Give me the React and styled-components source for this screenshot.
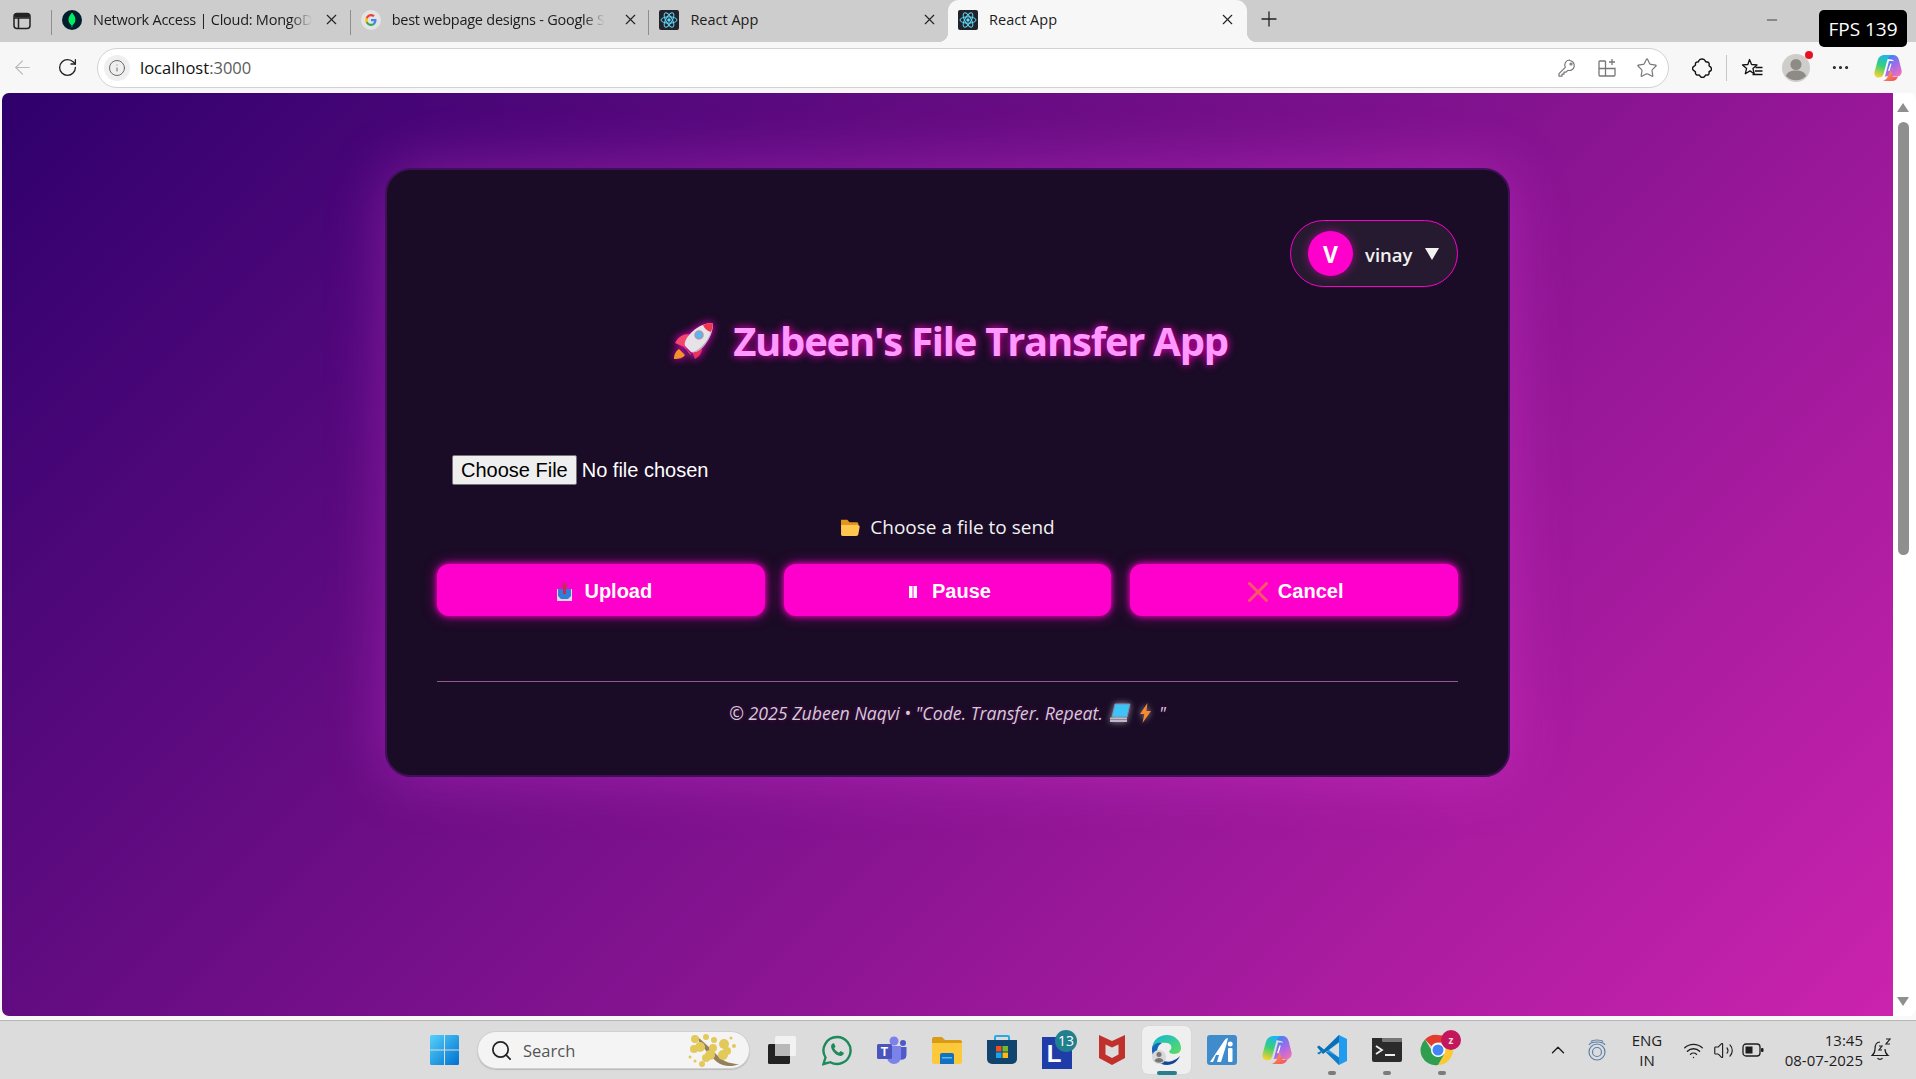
import React from 'react';
import styled, { createGlobalStyle } from 'styled-components';
import { ArrowLeft, RotateCw, Info, X, Plus, Minus, Star, Search, ChevronUp, Wifi, Volume2, MoreHorizontal } from 'lucide-react';

const UI = '"Open Sans", "Noto Sans", sans-serif';

const Global = createGlobalStyle`
  html, body { margin: 0; padding: 0; height: 100%; overflow: hidden; }
  body { font-family: ${UI}; background: #f7f7f7; }
  * { box-sizing: border-box; }
`;

const Screen = styled.div`
  position: relative; width: 1916px; height: 1079px;
  display: flex; flex-direction: column; overflow: hidden;
`;

/* ---------- tab strip ---------- */
const TabStrip = styled.div`
  height: 42px; flex: none; background: #cdcdcd; display: flex; align-items: stretch;
`;
const SideButton = styled.div`
  width: 52px; display: flex; align-items: center; justify-content: flex-start; padding-left: 13px; position: relative;
  &::after { content: ''; position: absolute; right: 0; top: 10px; bottom: 7px; width: 1px; background: #8e8e8e; }
`;
const Tab = styled.div`
  width: 298.7px; height: 42px; flex: none; position: relative;
  display: flex; align-items: center; padding: 0 10px 3px 10px;
  color: #1c1c1c; font-size: 14.5px;
  background: ${p => (p.$active ? '#f7f7f7' : 'transparent')};
  border-radius: ${p => (p.$active ? '11px 11px 0 0' : '0')};
  ${p => p.$sep && `&::after { content: ''; position: absolute; right: 0; top: 10px; bottom: 7px; width: 1px; background: #8e8e8e; }`}
  ${p => p.$active && `
    &::before, &::after {
      content: ''; position: absolute; bottom: 0; width: 10px; height: 10px;
    }
    &::before { left: -10px; background: radial-gradient(circle at 0 0, transparent 10px, #f7f7f7 10.5px); }
    &::after { right: -10px; background: radial-gradient(circle at 100% 0, transparent 10px, #f7f7f7 10.5px); }
  `}
`;
const TabIcon = styled.span`
  width: 20px; height: 20px; flex: none; display: flex; align-items: center; justify-content: center; margin-right: 11px;
`;
const TabTitle = styled.span`
  flex: 1; white-space: nowrap;
  ${p => p.$fade && `letter-spacing: -0.25px; -webkit-mask-image: linear-gradient(90deg, #000 222px, transparent 226px), linear-gradient(90deg, #000 0, #000 0); mask-image: linear-gradient(90deg, #000 90%, transparent 100%); flex: 0 0 auto; margin-right: auto;`}
`;
const TabClose = styled.span`
  width: 18px; display: flex; justify-content: center; color: #222; flex: none;
`;
const NewTab = styled.div`
  width: 44px; display: flex; align-items: center; justify-content: center; color: #222; padding-bottom: 4px; padding-left: 1px;
`;
const WinControls = styled.div`
  margin-left: auto; width: 152px; display: flex; align-items: flex-start; padding-top: 12px; color: #222;
`;
const FpsBadge = styled.div`
  position: absolute; left: 1819px; top: 10px; width: 88px; height: 37px;
  background: #000; color: #fff; border-radius: 5px; font-size: 19px;
  display: flex; align-items: center; justify-content: center; z-index: 5;
`;

/* ---------- tool bar ---------- */
const Toolbar = styled.div`
  height: 51px; flex: none; background: #f7f7f7; display: flex; align-items: center; padding-right: 2px;
`;
const ToolButton = styled.div`
  width: ${p => p.$w || 44}px; height: 40px; flex: none; display: flex; align-items: center; justify-content: center;
  position: relative; color: ${p => p.$dim ? '#b9b9b9' : '#222'};
`;
const Address = styled.div`
  flex: 1; height: 40px; margin: 0 11px 0 7px; background: #fff; border: 1.5px solid #d2d2d2; border-radius: 20px;
  display: flex; align-items: center; padding-left: 6px; padding-right: 1px;
`;
const InfoBubble = styled.div`
  width: 26px; height: 26px; border-radius: 50%; background: #efefef; color: #666;
  display: flex; align-items: center; justify-content: center; margin-right: 10px;
`;
const Url = styled.div`
  flex: 1; font-size: 16.5px; color: #111; white-space: nowrap;
  & > span { color: #5c5c5c; }
`;
const AddrIcon = styled.div`
  width: 40px; display: flex; align-items: center; justify-content: center; color: #777;
`;
const ToolDivider = styled.div`
  width: 1px; height: 26px; background: #c6c6c6; margin: 0 3px 0 2px; flex: none;
`;
const NotifyDot = styled.span`
  position: absolute; right: 5px; top: 3px; width: 8px; height: 8px; background: #e81123; border-radius: 50%;
`;

/* ---------- page ---------- */
const Main = styled.div`
  height: 927px; flex: none; display: flex; padding: 0 0 4px 2px; background: #f9f9f9;
`;
const Viewport = styled.main`
  flex: 1; border-radius: 7px 0 0 7px; display: flex; justify-content: center; align-items: flex-start; padding-top: 75px;
  background: linear-gradient(135deg, #2f006c 0%, #cb23ae 100%);
`;
const Card = styled.section`
  width: 1125px; height: 609px; padding: 50px; background: #1a0b26; border: 2px solid #3f0f57; border-radius: 26px;
  box-shadow: 0 0 60px rgba(255, 70, 240, 0.3); display: flex; flex-direction: column;
`;
const Header = styled.div`
  display: flex; justify-content: flex-end;
`;
const ProfilePill = styled.div`
  width: 168px; height: 67px; border: 1px solid #ff00cc; border-radius: 34px; background: #261a30;
  display: flex; align-items: center; padding-left: 17px;
`;
const Avatar = styled.div`
  width: 45px; height: 45px; border-radius: 50%; background: #ff00cc; color: #fff; font-weight: 700; font-size: 23px;
  font-family: ${UI}; display: flex; align-items: center; justify-content: center; box-shadow: 0 0 10px rgba(255,0,204,.55);
`;
const UserName = styled.span`
  margin-left: 12px; color: #f2f2f2; font-size: 18.5px; font-weight: 600; padding-top: 1px;
`;
const Caret = styled.span`
  margin-left: 13px; width: 0; height: 0; border-left: 7px solid transparent; border-right: 7px solid transparent; border-top: 12px solid #f2f2f2; margin-top: 0;
`;
const Title = styled.h1`
  margin: 27px 0 0; height: 54px; padding-left: 7px; font-size: 40px; line-height: 54px; font-weight: 700; color: #ff99ff; text-align: center;
  letter-spacing: -1.25px; text-shadow: 0 0 8px #ff00cc; display: flex; align-items: center; justify-content: center; gap: 19px; font-family: ${UI};
  & > svg { filter: drop-shadow(0 0 4px #ff00cc); }
`;
const FileRow = styled.div`
  margin-top: 87px; padding-left: 15px; height: 30px; display: flex;
`;
const FileInput = styled.input`
  font: 20px "Liberation Sans", Arial, sans-serif; color: #fff; height: 30px; width: 420px;
  &::file-selector-button {
    font: 20px "Liberation Sans", Arial, sans-serif; height: 30px; margin-right: 5px; padding: 1px 8px;
    background: #efefef; color: #000; border: 1px solid #767676; border-radius: 2px;
  }
`;
const Hint = styled.p`
  margin: 29px 0 0; height: 27px; line-height: 27px; text-align: center; color: #f1f1f1; font-size: 19px;
  display: flex; align-items: center; justify-content: center; gap: 9px;
`;
const Actions = styled.div`
  margin-top: 23px; display: grid; grid-template-columns: repeat(3, 1fr); gap: 19px;
`;
const ActionButton = styled.button`
  height: 52px; background: #ff00cc; border: 0; border-radius: 12px; color: #fff;
  font: 700 20px "Liberation Sans", Arial, sans-serif; box-shadow: 0 0 14px #ff00cc80, 0 0 6px #ff00cc;
  display: flex; align-items: center; justify-content: center; gap: 10px;
  padding: 3px ${p => p.$pr || 0}px 0 ${p => p.$pl || 0}px;
`;
const BtnIcon = styled.span`
  width: 20px; height: 24px; display: flex; align-items: center; justify-content: center;
`;
const Rule = styled.hr`
  margin: 65px 0 0; border: 0; height: 1px; background: #94578f;
`;
const Footer = styled.footer`
  margin-top: 19px; height: 24px; line-height: 24px; text-align: center; font-style: italic; font-size: 17.7px; color: #d2ccd8;
  text-shadow: 0 0 5px rgba(255,0,204,.3);
  display: flex; align-items: center; justify-content: center; gap: 7px;
  & > svg { filter: drop-shadow(0 0 3px rgba(255,255,255,.55)); }
`;

/* ---------- scroll bar ---------- */
const ScrollBar = styled.div`
  width: 23px; flex: none; background: #fff; border-radius: 0 8px 8px 0; display: flex; flex-direction: column; align-items: center;
  padding: 10px 3px 10px 0;
`;
const ArrowUp = styled.div`
  width: 0; height: 0; border-left: 6px solid transparent; border-right: 6px solid transparent; border-bottom: 9px solid #8f8f8f;
`;
const ArrowDown = styled(ArrowUp)`
  border-bottom: 0; border-top: 9px solid #8f8f8f; margin-top: auto;
`;
const Thumb = styled.div`
  width: 11px; height: 433px; margin-top: 10px; background: #8f8f8f; border-radius: 6px;
`;

/* ---------- task bar ---------- */
const Taskbar = styled.footer`
  height: 59px; flex: none; background: #dcdcdc; border-top: 1px solid #b7b7b7; display: flex; align-items: center; padding-left: 417px;
`;
const TaskSlot = styled.div`
  width: 55px; height: 48px; flex: none; position: relative; display: flex; align-items: center; justify-content: center;
  ${p => p.$active && `&::before { content: ''; position: absolute; left: 3px; right: 3px; top: 0; bottom: 0; background: #efefef; border-radius: 6px; box-shadow: 0 0 1px #bbb; }
   & > svg { position: relative; }`}
`;
const RunDot = styled.span`
  position: absolute; bottom: -1px; left: 50%; transform: translateX(-50%); height: 4px; border-radius: 2px;
  width: ${p => (p.$wide ? 20 : 8)}px; background: ${p => (p.$wide ? '#2a7f8f' : '#7b7b7b')};
`;
const SearchBox = styled.div`
  width: 273px; height: 38px; margin: 0 4px 0 5px; background: #f4f4f4; border-radius: 19px; border: 1px solid #d0d0d0; flex: none;
  display: flex; align-items: center; padding-left: 12px; color: #555; font-size: 16.5px; gap: 10px; position: relative; box-shadow: 0 1px 1px #bbb;
  & > svg:first-child { color: #222; }
  & > svg:last-child { margin-left: auto; margin-right: 6px; }
`;
const Tray = styled.div`
  margin-left: auto; display: flex; align-items: center; padding-right: 21px; color: #1d1d1d;
`;
const TrayIcon = styled.div`
  width: ${p => p.$w || 30}px; display: flex; align-items: center; justify-content: center; flex: none; margin-right: ${p => p.$mr || 0}px;
`;
const Lang = styled.div`
  width: 50px; margin-right: 6px; margin-left: 1px; text-align: center; font-size: 15px; line-height: 20px;
`;
const Clock = styled.div`
  width: 80px; text-align: right; font-size: 15px; line-height: 20px; margin: 0 6px 0 15px; white-space: nowrap;
`;

/* ---------- drawings ---------- */
const Mongo = () => (
  <svg width="20" height="20" viewBox="0 0 20 20"><circle cx="10" cy="10" r="10" fill="#001e2b"/><path d="M10 2.5c2.6 3 3.6 5.3 3.4 7.7-.2 2.3-1.6 4-3 5l-.2 2.4h-.5l-.2-2.4c-1.4-1-2.8-2.7-3-5C6.400 7.800 7.400 5.500 10 2.500z" fill="#00ed64"/></svg>
);
const GoogleG = () => (
  <svg width="20" height="20" viewBox="0 0 20 20"><circle cx="10" cy="10" r="10" fill="#e4e4e4"/><path d="M15.500 10.200c0-.4 0-.8-.1-1.200H10v2.300h3.100c-.1.700-.5 1.300-1.100 1.700v1.400h1.800c1.100-1 1.700-2.500 1.700-4.200z" fill="#4285f4"/><path d="M10 16c1.500 0 2.800-.5 3.800-1.400L12 13.200c-.5.3-1.200.6-2 .6-1.500 0-2.800-1-3.200-2.400H4.900v1.400C5.900 14.700 7.800 16 10 16z" fill="#34a853"/><path d="M6.800 11.400c-.2-.9-.2-1.800 0-2.700V7.300H4.900c-.8 1.600-.8 3.800 0 5.500z" fill="#fbbc05"/><path d="M10 6.300c.8 0 1.600.3 2.200.8l1.600-1.600C12.800 4.600 11.500 4 10 4 7.800 4 5.900 5.300 4.900 7.300l1.900 1.400C7.200 7.300 8.500 6.300 10 6.300z" fill="#ea4335"/></svg>
);
const ReactFav = () => (
  <svg width="20" height="20" viewBox="0 0 20 20"><rect width="20" height="20" rx="2" fill="#20232a"/><g fill="none" stroke="#61dafb" strokeWidth="1"><ellipse cx="10" cy="10" rx="8" ry="3.200"/><ellipse cx="10" cy="10" rx="8" ry="3.200" transform="rotate(60 10 10)"/><ellipse cx="10" cy="10" rx="8" ry="3.200" transform="rotate(120 10 10)"/></g><circle cx="10" cy="10" r="1.700" fill="#61dafb"/></svg>
);
const SidebarIcon = () => (
  <svg width="18" height="18" viewBox="0 0 18 18" fill="none" stroke="#222" strokeWidth="1.500"><rect x="1" y="1.500" width="16" height="15" rx="3"/><path d="M5.500 6v10M1 6h16" /><rect x="1.500" y="2" width="15" height="3.500" fill="#222" stroke="none" rx="1.500"/></svg>
);
const KeyIcon = () => (
  <svg width="20" height="20" viewBox="0 0 20 20" fill="none" stroke="#777" strokeWidth="1.200"><path d="M12.500 2.500a5 5 0 1 1-1.600 9.800L9 14.200H7v2H5v2H2v-2.500l6.300-6.400a5 5 0 0 1 4.200-7.300z" strokeLinejoin="round"/><circle cx="14" cy="6" r="1"/></svg>
);
const AppsPlus = () => (
  <svg width="20" height="20" viewBox="0 0 20 20" fill="none" stroke="#777" strokeWidth="1.300"><path d="M8.500 3H3a1 1 0 0 0-1 1v13a1 1 0 0 0 1 1h14a1 1 0 0 0 1-1v-6.500H2M8.500 3v15M8.500 10.500h9.500"/><path d="M15 1v6M12 4h6"/></svg>
);
const PuzzleIcon = () => (
  <svg width="20" height="20" viewBox="0 0 20 20" fill="none" stroke="#111" strokeWidth="1.400" strokeLinejoin="round"><path d="M7 2.500C8 .5 12 .5 13 2.500 13.500 3.500 13.500 4 15 4c2 0 2.500 1.500 2 3.500-.2 1 2.500 1 2.500 3.500s-2.500 2-2.500 3c.5 2.500-1 3.500-3 3-1-.2-1 2.500-3.500 2.500S8 17 7 17c-2.500.5-4-1-3.500-3 .3-1-3-1-3-3.500S3.500 8 3.500 7C3 5 4.500 3.500 6 4c.5 0 .5-.5 1-1.500z"/></svg>
);
const FavIcon = () => (
  <svg width="22" height="20" viewBox="0 0 22 20" fill="none" stroke="#111" strokeWidth="1.300" strokeLinejoin="round"><path d="M8.500 1.500l2.100 5 5.400.4-4.100 3.500 1.300 5.300L9 12.900l-4.700 2.800 1.300-5.300-4.100-3.500 5.400-.4z"/><path d="M14.500 9.500h7M14 13h7.500M11.500 16.500h10"/></svg>
);
const ProfileIcon = ({ s = 28 }) => (
  <svg width={s} height={s} viewBox="0 0 28 28"><circle cx="14" cy="14" r="14" fill="#cfcdca"/><circle cx="14" cy="10.500" r="5.500" fill="#8e8b87"/><path d="M4 22c1-4 5-5.500 10-5.500S23 18 24 22a14 14 0 0 1-20 0z" fill="#8e8b87"/></svg>
);
const Copilot = ({ s = 28, id = 'c' }) => (
  <svg width={s} height={s} viewBox="0 0 28 28">
    <defs>
      <linearGradient id={`${id}a`} x1="0.600" y1="0" x2="0.300" y2="1"><stop offset="0" stopColor="#1bb5f2"/><stop offset=".5" stopColor="#35d07a"/><stop offset="1" stopColor="#f7d22c"/></linearGradient>
      <linearGradient id={`${id}b`} x1="0.200" y1="0" x2="0.800" y2="1"><stop offset="0" stopColor="#2f86f0"/><stop offset=".55" stopColor="#a76ae8"/><stop offset="1" stopColor="#f36fb5"/></linearGradient>
      <linearGradient id={`${id}d`} x1="0" y1="0" x2="1" y2="1"><stop offset="0" stopColor="#f9b233"/><stop offset="1" stopColor="#f0456c"/></linearGradient>
    </defs>
    <path d="M11 1h8c3 0 5 1.500 6 5l2.500 10c.8 3.500-1.200 6.500-4.500 6.500h-6L19.500 8c.4-1.500-.5-2.500-2-2.500L14 5z" fill={`url(#${id}b)`}/>
    <path d="M15 7h3.500c1.200 0 1.800.7 1.500 2l-3 13-6 .5z" fill={`url(#${id}b)`}/>
    <path d="M10.500 1H19c-3.500.3-5 2.500-6 6l-3.500 13c-.7 2.500-2.500 3.500-5 3.500-3 0-4.500-2.500-4-5.500L3.500 7c.8-3.800 3.300-6 7-6z" fill={`url(#${id}a)`}/>
    <path d="M9 27h9c3 0 4.800-1.500 6-4.500-1.500.6-3 .6-5 .6l-2.500-7c-1 3-2 6-3.500 8-1 1.500-2.500 2.500-4 2.900z" fill={`url(#${id}d)`}/>
    <path d="M16.500 9.500c-.8 2-1.700 5-2.500 7.500l1.500-.3c.8-2.200 1.500-5 2-7z" fill="#fff"/>
  </svg>
);
const Rocket = () => (
  <svg width="40" height="38" viewBox="0 0 40 38">
    <path d="M0 37c0-5 2-8 5-10l6 6c-2 3-6 4-11 4z" fill="#f2932a"/>
    <path d="M15 12C9 12 4 15 1 21l9 4z" fill="#f4476e"/>
    <path d="M28 24c1 5-2 10-7 13l-4-10z" fill="#e8335e"/>
    <path d="M39 1c-9 0-17 4-24 12-4 5-5 9-4 11l6 6c2 1 7 0 12-5C36 17 39 9 39 1z" fill="#e7e2e8"/>
    <path d="M38 5c-1 7-5 14-10 19-4 4-8 6-11 6 2 1 7 0 12-5C35 18 38 11 38 5z" fill="#b9b0c2"/>
    <path d="M39 1c-4 0-7 .7-10 2 1 3 4 6 8 7 1-3 2-6 2-9z" fill="#f0344f"/>
    <circle cx="25" cy="13" r="4" fill="#5db4f5" stroke="#a39aad" strokeWidth="1.500"/>
    <path d="M8 20c-1 3 2 5 5 8l3 6 1-2c-3-3-6-7-9-12z" fill="#f2406a"/>
    <path d="M9 27l10 9" stroke="#352a55" strokeWidth="1.300"/>
  </svg>
);
const Folder = () => (
  <svg width="21" height="21" viewBox="0 0 20 20"><path d="M1 2.500h6l2 2.500h7c1 0 1.500.7 1.500 1.500v2H1z" fill="#e0961e"/><path d="M1 7.500h15c1.500 0 3 .5 2.700 2l-1.200 7c-.2 1-1 1.500-2 1.500H2.500c-1 0-1.500-.5-1.500-1.500z" fill="#ffc74d"/></svg>
);
const UploadEmoji = () => (
  <svg width="17" height="20" viewBox="0 0 17 20"><path d="M1 7h15v12H1z" fill="#d9d9ea"/><path d="M2 7h13v7l-3 3H5l-3-3z" fill="#2f7fd6"/><path d="M8.500 0l3.600 4.400H10V12H7V4.400H4.900z" fill="#c72a5a"/></svg>
);
const PauseBars = () => (
  <svg width="20" height="16" viewBox="0 0 20 16"><rect x="7" y="2" width="3.500" height="12" fill="#fff"/><rect x="11.500" y="2" width="3.500" height="12" fill="#fff"/></svg>
);
const CrossEmoji = () => (
  <svg width="20" height="20" viewBox="0 0 20 20" stroke="#fa5a66" strokeWidth="3" strokeLinecap="round"><path d="M1.500 1.500l17 17M18.500 1.500l-17 17"/></svg>
);
const Laptop = () => (
  <svg width="22" height="20" viewBox="0 0 22 20"><path d="M5 1h15l-3 13H2z" fill="#3dc4f8" stroke="#7c8fb0"/><path d="M0 14.500h17v4.500H0z" fill="#bdb9c8"/><path d="M0 16.500h17" stroke="#8a8796"/></svg>
);
const Bolt = () => (
  <svg width="13" height="20" viewBox="0 0 13 20"><path d="M8.500 0L1 11h4.300L3.500 20 12 8H7.400z" fill="#f98a2c"/></svg>
);
const WinLogo = () => (
  <svg width="29" height="30" viewBox="0 0 29 30">
    <defs><linearGradient id="w" x1="0" y1="0" x2="1" y2="1"><stop offset="0" stopColor="#55d2fb"/><stop offset="1" stopColor="#0070cf"/></linearGradient></defs>
    <path d="M0 1.500A1.500 1.500 0 0 1 1.500 0H14v14.500H0zM15 0h12.500A1.500 1.500 0 0 1 29 1.500v13H15zM0 15.500h14V30H1.500A1.500 1.500 0 0 1 0 28.500zM15 15.500h14v13a1.500 1.500 0 0 1-1.500 1.500H15z" fill="url(#w)"/>
  </svg>
);
const Blossom = () => {
  const dots = [[8,8,4],[13,16,5],[7,18,4],[19,6,3],[26,17,4],[27,9,3],[23,24,5],[19,27,4],[37,13,5],[40,20,4],[36,24,5],[47,15,2],[44,7,1.500],[3,26,1.500],[8,30,1.500],[15,33,3]];
  return (
    <svg width="56" height="38" viewBox="0 0 56 38" style={{ flex: 'none' }}>
      <path d="M8 4c8 6 16 14 24 22 6 5 12 7 20 7-6 3-16 3-22-2C22 24 14 14 8 4z" fill="#94805a"/>
      {dots.map(([x, y, r], i) => <circle key={i} cx={x} cy={y} r={r} fill="#e3c95a"/>)}
    </svg>
  );
};
const TaskView = () => (
  <svg width="30" height="30" viewBox="0 0 30 30"><rect x="8" y="1" width="21" height="20" rx="1.500" fill="#f2f2f2"/><rect x="1" y="9" width="22" height="20" rx="1.500" fill="#222"/><rect x="8" y="9" width="15" height="12" fill="#b9b9b9"/></svg>
);
const WhatsApp = () => (
  <svg width="30" height="31" viewBox="0 0 30 31"><path d="M15 2a13.500 13.500 0 0 0-11.500 20.500L1.500 29l6.800-1.800A13.500 13.500 0 1 0 15 2z" fill="none" stroke="#1c8a5b" strokeWidth="2.400"/><path d="M10.500 8.500c-2 1.500-1.800 4.500.5 7.700 2.500 3.500 6 5.300 8.500 4.500 1.500-.5 2.500-2 2.300-3l-3.300-1.700-1.500 1.700c-1.500-.5-4-2.700-4.800-4.500l1.300-1.700-1.500-3.200z" fill="#1c8a5b"/></svg>
);
const Teams = () => (
  <svg width="30" height="28" viewBox="0 0 30 28"><circle cx="17" cy="5" r="4.500" fill="#7b83eb"/><circle cx="26" cy="7" r="3" fill="#5059c9"/><path d="M22 11h7.500v8a4.500 4.500 0 0 1-7.500 3.500z" fill="#5059c9"/><path d="M10 10h14v11a7 7 0 0 1-14 0z" fill="#7b83eb"/><rect x="0" y="8" width="15" height="15" rx="1.500" fill="#4b53bc"/><text x="7.500" y="20" fontFamily="Liberation Sans" fontWeight="700" fontSize="12" textAnchor="middle" fill="#fff">T</text></svg>
);
const Explorer = () => (
  <svg width="30" height="28" viewBox="0 0 30 28"><path d="M0 3a2 2 0 0 1 2-2h8l3 3h15a2 2 0 0 1 2 2v2H0z" fill="#d99a16"/><path d="M0 7h30v19a2 2 0 0 1-2 2H2a2 2 0 0 1-2-2z" fill="#fcc93d"/><path d="M8 19a2 2 0 0 1 2-2h10a2 2 0 0 1 2 2v9H8z" fill="#1272c2"/><rect x="10" y="21" width="10" height="1.500" fill="#5fb5f0"/></svg>
);
const StoreIcon = () => (
  <svg width="30" height="30" viewBox="0 0 30 30"><path d="M8 5V2a1 1 0 0 1 1-1h12a1 1 0 0 1 1 1v3" fill="none" stroke="#29a9e6" strokeWidth="2"/><path d="M0 5h30v19a5 5 0 0 1-5 5H5a5 5 0 0 1-5-5z" fill="#11436f"/><rect x="9" y="11" width="5.500" height="5.500" fill="#ef4f24"/><rect x="15.500" y="11" width="5.500" height="5.500" fill="#78b82a"/><rect x="9" y="17.500" width="5.500" height="5.500" fill="#1ba3e8"/><rect x="15.500" y="17.500" width="5.500" height="5.500" fill="#fdb813"/></svg>
);
const LApp = () => (
  <svg width="44" height="40" viewBox="0 0 44 40"><rect x="7" y="7" width="30" height="32" fill="#1f3da8"/><text x="19" y="32" fontFamily="Liberation Sans" fontWeight="700" fontSize="24" textAnchor="middle" fill="#fff">L</text><circle cx="31" cy="11" r="11" fill="#217f8e"/><text x="31" y="16" fontFamily="Open Sans" fontSize="14" textAnchor="middle" fill="#fff">13</text></svg>
);
const McAfee = () => (
  <svg width="28" height="32" viewBox="0 0 28 32"><path d="M1 1l13 6 13-6v23l-13 7-13-7z" fill="#c1312c"/><path d="M7.500 10.500l6.500 3 6.500-3v10l-6.500 3.500-6.500-3.500z" fill="#dcdcdc"/></svg>
);
const EdgeIcon = () => (
  <svg width="34" height="34" viewBox="0 0 34 34">
    <defs>
      <linearGradient id="ea" x1="0" y1="0" x2="1" y2="1"><stop offset="0" stopColor="#0fb8d9"/><stop offset="1" stopColor="#5fdd5c"/></linearGradient>
      <linearGradient id="eb" x1="0" y1="0" x2="1" y2="1"><stop offset="0" stopColor="#1a6bc4"/><stop offset="1" stopColor="#0c3e8a"/></linearGradient>
    </defs>
    <path d="M2 15C3 7 9 2 17 2c8 0 14 6 14 13 0 3-2 6-7 6-3 0-5-1-5-3 3-1 4-7-2-8C11 9 4 10 2 15z" fill="url(#ea)"/>
    <path d="M2 15c1-4 6-6 10-5-4 2-6 7-4 12 2 5 8 8 14 6 3-1 6-3 8-5-2 5-7 9-13 9C8 32 1 24 2 15z" fill="url(#eb)"/>
    <circle cx="9" cy="24" r="7" fill="#d8d8d8"/><circle cx="9" cy="21.500" r="2.500" fill="#777"/><path d="M4.500 28c.5-2 2.500-3 4.500-3s4 1 4.500 3a7 7 0 0 1-9 0z" fill="#777"/>
  </svg>
);
const AiApp = () => (
  <svg width="30" height="30" viewBox="0 0 30 30"><rect width="30" height="30" rx="3" fill="#3f8bcb"/><path d="M3 27L17 6c1-2 3-3 4-3l-2 8-5 16h-4l2-7H9l-3 7z" fill="#fff"/><rect x="21" y="13" width="4.500" height="14" rx="1" fill="#fff"/><circle cx="23.200" cy="9" r="2.500" fill="#fff"/></svg>
);
const VSCode = () => (
  <svg width="30" height="32" viewBox="0 0 30 32"><path d="M22 1l8 4v22l-8 4-13-15z" fill="#1f9cf0"/><path d="M22 1L7 15.500 2 11.500 0 13l6 7 16-12z" fill="#0a6fb5" /><path d="M22 31L7 16.500 2 20.500 0 19l6-3 16 7z" fill="#0f7cc6"/><path d="M22 8.500v15L12 16z" fill="#dcdcdc"/></svg>
);
const Terminal = () => (
  <svg width="30" height="24" viewBox="0 0 30 24"><rect width="30" height="24" rx="2" fill="#2b2b2b"/><rect x="0" y="0" width="10" height="4" fill="#2b2b2b"/><rect x="10" y="0" width="20" height="4" rx="1" fill="#777"/><path d="M4 8l6 4-6 4" fill="none" stroke="#eee" strokeWidth="1.800"/><rect x="13" y="16" width="10" height="2" fill="#eee"/></svg>
);
const Chrome = () => (
  <svg width="44" height="40" viewBox="0 0 44 40">
    <path d="M18 5a15 15 0 0 1 13 7.500H18a7.500 7.500 0 0 0-6.500 3.750L5 9.500A15 15 0 0 1 18 5z" fill="#e33b2e"/>
    <path d="M31 12.500A15 15 0 0 1 18 35l6.500-11.250a7.500 7.500 0 0 0 0-7.500z" fill="#fcc934"/>
    <path d="M5 9.500l6.500 10.500a7.500 7.500 0 0 0 13 3.750L18 35A15 15 0 0 1 5 9.500z" fill="#2f9e4f"/>
    <circle cx="18" cy="20" r="7" fill="#fff"/><circle cx="18" cy="20" r="5.500" fill="#4285f4"/>
    <circle cx="31" cy="10" r="10" fill="#c2185b"/><text x="31" y="14" fontFamily="Open Sans" fontSize="10" fontWeight="700" textAnchor="middle" fill="#f8d5e2">z</text>
  </svg>
);
const Rings = () => (
  <svg width="20" height="24" viewBox="0 0 20 24" fill="none" stroke="#5b7fa8" strokeWidth="1.200"><circle cx="10" cy="14" r="8"/><circle cx="10" cy="14" r="4.500"/><path d="M2 7c2-4 14-4 16 0"/><path d="M4 3.500c2-2 10-2 12 0"/></svg>
);
const Battery = () => (
  <svg width="22" height="14" viewBox="0 0 22 14"><rect x="1" y="1" width="17" height="12" rx="3" fill="none" stroke="#1d1d1d" strokeWidth="1.300"/><rect x="3.500" y="3.500" width="7" height="7" fill="#1d1d1d"/><rect x="19" y="5" width="2.500" height="4" rx="1" fill="#1d1d1d"/></svg>
);
const BellZ = () => (
  <svg width="22" height="24" viewBox="0 0 22 24" fill="none" stroke="#1d1d1d" strokeWidth="1.200"><path d="M9 4C5 4 4 8 4 11c0 3-1 5-3 6.500h16c-2-1.500-3-3.500-3-6.500"/><path d="M6.500 20a3 3 0 0 0 5 0"/><path d="M8 8h3l-3 4h3M15 1h4l-4 5h4"/></svg>
);

export default function App() {
  return (
    <Screen>
      <Global />
      <TabStrip>
        <SideButton><SidebarIcon /></SideButton>
        <Tab $sep><TabIcon><Mongo /></TabIcon><TabTitle $fade>Network Access | Cloud: MongoD</TabTitle><TabClose><X size={17} strokeWidth={1.6} /></TabClose></Tab>
        <Tab $sep><TabIcon><GoogleG /></TabIcon><TabTitle $fade>best webpage designs - Google S</TabTitle><TabClose><X size={17} strokeWidth={1.6} /></TabClose></Tab>
        <Tab><TabIcon><ReactFav /></TabIcon><TabTitle>React App</TabTitle><TabClose><X size={17} strokeWidth={1.6} /></TabClose></Tab>
        <Tab $active><TabIcon><ReactFav /></TabIcon><TabTitle>React App</TabTitle><TabClose><X size={17} strokeWidth={1.6} /></TabClose></Tab>
        <NewTab><Plus size={24} strokeWidth={1.3} /></NewTab>
        <WinControls><Minus size={16} strokeWidth={1.2} /></WinControls>
      </TabStrip>
      <FpsBadge>FPS 139</FpsBadge>
      <Toolbar>
        <ToolButton $w={45} $dim><ArrowLeft size={23} strokeWidth={1.2} /></ToolButton>
        <ToolButton $w={45}><RotateCw size={21} strokeWidth={1.5} /></ToolButton>
        <Address>
          <InfoBubble><Info size={18} strokeWidth={1.3} /></InfoBubble>
          <Url>localhost<span>:3000</span></Url>
          <AddrIcon><KeyIcon /></AddrIcon>
          <AddrIcon><AppsPlus /></AddrIcon>
          <AddrIcon><Star size={22} strokeWidth={1.3} /></AddrIcon>
        </Address>
        <ToolButton><PuzzleIcon /></ToolButton>
        <ToolDivider />
        <ToolButton><FavIcon /></ToolButton>
        <ToolButton><ProfileIcon /><NotifyDot /></ToolButton>
        <ToolButton><MoreHorizontal size={21} strokeWidth={1.6} /></ToolButton>
        <ToolButton $w={52}><Copilot /></ToolButton>
      </Toolbar>
      <Main>
        <Viewport>
          <Card>
            <Header>
              <ProfilePill>
                <Avatar>V</Avatar>
                <UserName>vinay</UserName>
                <Caret />
              </ProfilePill>
            </Header>
            <Title><Rocket /><span>Zubeen's File Transfer App</span></Title>
            <FileRow><FileInput type="file" /></FileRow>
            <Hint><Folder /><span>Choose a file to send</span></Hint>
            <Actions>
              <ActionButton $pl={5}><BtnIcon><UploadEmoji /></BtnIcon>Upload</ActionButton>
              <ActionButton $pr={2}><BtnIcon><PauseBars /></BtnIcon>Pause</ActionButton>
              <ActionButton $pl={3}><BtnIcon><CrossEmoji /></BtnIcon>Cancel</ActionButton>
            </Actions>
            <Rule />
            <Footer><span>© 2025 Zubeen Naqvi • "Code. Transfer. Repeat.</span><Laptop /><Bolt /><span>"</span></Footer>
          </Card>
        </Viewport>
        <ScrollBar><ArrowUp /><Thumb /><ArrowDown /></ScrollBar>
      </Main>
      <Taskbar>
        <TaskSlot><WinLogo /></TaskSlot>
        <SearchBox><Search size={23} strokeWidth={1.8} /><span>Search</span><Blossom /></SearchBox>
        <TaskSlot><TaskView /></TaskSlot>
        <TaskSlot><WhatsApp /></TaskSlot>
        <TaskSlot><Teams /></TaskSlot>
        <TaskSlot><Explorer /></TaskSlot>
        <TaskSlot><StoreIcon /></TaskSlot>
        <TaskSlot><LApp /></TaskSlot>
        <TaskSlot><McAfee /></TaskSlot>
        <TaskSlot $active><EdgeIcon /><RunDot $wide /></TaskSlot>
        <TaskSlot><AiApp /></TaskSlot>
        <TaskSlot><Copilot s={30} id="t" /></TaskSlot>
        <TaskSlot><VSCode /><RunDot /></TaskSlot>
        <TaskSlot><Terminal /><RunDot /></TaskSlot>
        <TaskSlot><Chrome /><RunDot /></TaskSlot>
        <Tray>
          <TrayIcon $mr={9}><ChevronUp size={22} strokeWidth={1.5} /></TrayIcon>
          <TrayIcon $mr={9}><Rings /></TrayIcon>
          <Lang>ENG<br />IN</Lang>
          <TrayIcon><Wifi size={21} strokeWidth={1.5} /></TrayIcon>
          <TrayIcon><Volume2 size={21} strokeWidth={1.3} /></TrayIcon>
          <TrayIcon><Battery /></TrayIcon>
          <Clock>13:45<br />08-07-2025</Clock>
          <TrayIcon $w={26}><BellZ /></TrayIcon>
        </Tray>
      </Taskbar>
    </Screen>
  );
}
